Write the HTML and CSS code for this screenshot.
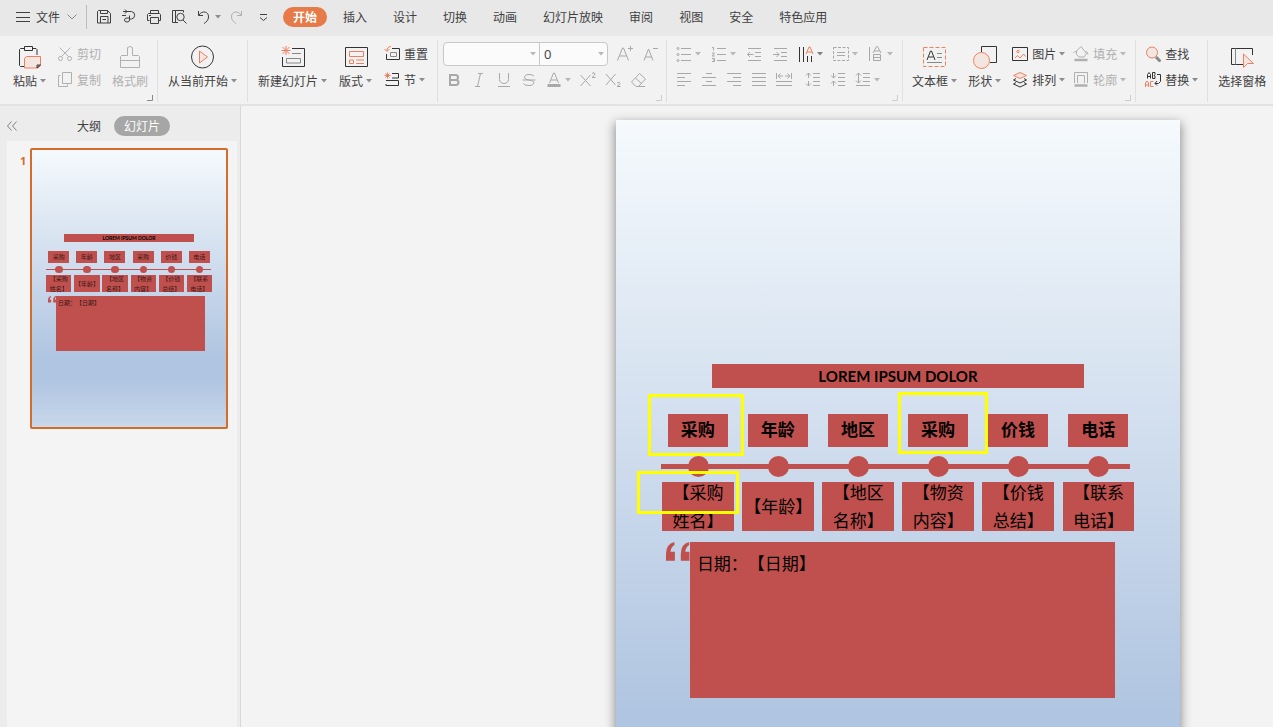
FILE: index.html
```html
<!DOCTYPE html>
<html lang="zh-CN">
<head>
<meta charset="utf-8">
<title>演示文稿</title>
<link rel="stylesheet" href="styles.css">
</head>
<body>
<svg class="defs" aria-hidden="true">
  <symbol id="caret" viewBox="0 0 6 4"><path d="M0 0h6L3 3.5z" fill="currentColor" stroke="none"/></symbol>
  <symbol id="corner" viewBox="0 0 6 6"><path d="M5.500 0v5.500H0" /></symbol>
  <symbol id="quote" viewBox="0 0 24 20"><path d="M8.500 0v3Q5 5 4.500 10H9v9H0v-7Q0 2 8.500 0zM23.500 0v3Q20 5 19.500 10H24v9h-9v-7Q15 2 23.500 0z" fill="currentColor" stroke="none"/></symbol>
</svg>

<header class="topbar">
  <button class="file"><svg class="i16" viewBox="0 0 16 16"><path d="M1 3.500h14M1 8.500h14M1 12.500h14"/></svg><span>文件</span><svg class="chev" viewBox="0 0 10 6"><path d="M.5.500 5 5 9.500.5"/></svg></button>
  <span class="rule"></span>
  <div class="quick">
    <button aria-label="保存"><svg class="i16" viewBox="0 0 16 16"><path d="M2.500 1.500h9l3 3v9.500h-13V2.500zM4.500 1.500v3h7v-3M4.500 14V7.500h7.500V14M6.500 10.500h3.500"/></svg></button>
    <button aria-label="输出"><svg class="i16" viewBox="0 0 16 16"><path d="M2 2.500h8.500a3.800 3.800 0 0 1 0 7.500H8.500V6.500M8.500 10v1a2.500 2 0 1 1-2.500-2h3M4 .5l2 2-2 2M1 6.500h4"/></svg></button>
    <button aria-label="打印"><svg class="i16" viewBox="0 0 16 16"><path d="M4.500 5V1.500h8V5M3.500 11.500h-2V5.500l1-1h11l1 1v6h-2M4.500 8.500h8v6h-8zM3 6.500h2"/></svg></button>
    <button aria-label="预览"><svg class="i16" viewBox="0 0 16 16"><path d="M7 13.500H1.500v-12h11v2"/><circle cx="9.500" cy="8" r="3.700"/><path d="m12 11 3.500 3.500M4.500 1.500v12"/></svg></button>
    <button aria-label="撤销" class="split"><svg class="i16" viewBox="0 0 16 16"><path d="M2.500 2v4.500H7M3 6C6 1 13 2.500 12.500 8c0 3-2 5-4.500 6.500"/></svg><svg class="caret"><use href="#caret"/></svg></button>
    <button aria-label="恢复" class="pale"><svg class="i16" viewBox="0 0 16 16"><path d="M13.500 2v4.500H9M13 6C10 1 3 2.500 3.500 8c0 3 2 5 4.500 6.500"/></svg></button>
    <button aria-label="自定义"><svg class="i16" viewBox="0 0 16 16"><path d="M5 5.500h7M5 8.500l3.500 3L12 8.500"/></svg></button>
  </div>
  <nav class="tabs">
    <button class="on">开始</button><button>插入</button><button>设计</button><button>切换</button><button>动画</button><button>幻灯片放映</button><button>审阅</button><button>视图</button><button>安全</button><button>特色应用</button>
  </nav>
</header>

<section class="ribbon">
  <div class="group first">
    <button class="big"><svg class="i24" viewBox="0 0 24 24"><path class="k" d="M6 3.500H2.500l-1 1v16l1 1H6M14 3.500h4l1 1V10M6.500 1.500h8v4h-8z"/><path class="o f" d="M8.500 11.500h14v9l-2.500 2.500H6.500v-9.500z"/><path d="M19 23v-3h3.500z" fill="#ee8060"/></svg><span>粘贴<svg class="caret"><use href="#caret"/></svg></span></button>
    <div class="rows off">
      <button class="cmd"><svg class="i16" viewBox="0 0 16 16"><path d="M2.500 1.500 12 11M13.500 1.500 4 11"/><circle cx="3.500" cy="12.500" r="2"/><circle cx="12.500" cy="12.500" r="2"/></svg>剪切</button>
      <button class="cmd"><svg class="i16" viewBox="0 0 16 16"><path d="M5.500.5h9v11h-9zM3.500 3.500h-2v11h9v-2"/></svg>复制</button>
    </div>
    <button class="big off"><svg class="i24" viewBox="0 0 24 24"><path d="M9.500 10.500V2.500q2.500-2 5 0v8h6l1 1v11h-19v-11l1-1zM2.500 15.500h19"/></svg><span>格式刷</span></button>
    <button class="launch dark" aria-label="更多"><svg><use href="#corner"/></svg></button>
  </div>
  <div class="group">
    <button class="big"><svg class="i24" viewBox="0 0 24 24"><circle class="k" cx="11.500" cy="12" r="11"/><path class="o f" d="M8.500 6v12l8-6z"/></svg><span>从当前开始<svg class="caret"><use href="#caret"/></svg></span></button>
  </div>
  <div class="group slides">
    <button class="big"><svg class="i24" viewBox="0 0 24 24"><path class="k" d="M11 3.500h12.500v18h-22V12"/><path class="g" d="M11 8.500h9M5.500 13.500h14v4.500h-14z"/><path class="o" d="M5 1v9M.5 5.500h9M1.500 2l7 7M8.500 2l-7 7"/></svg><span>新建幻灯片<svg class="caret"><use href="#caret"/></svg></span></button>
    <button class="big"><svg class="i24" viewBox="0 0 24 24"><path class="k" d="M1.500 2.500h22v19h-22z"/><path class="o" d="M5.500 6.500h14v5h-14zM5.500 15h4v3.500h-4zM12 15h8M12 18.500h8"/></svg><span>版式<svg class="caret"><use href="#caret"/></svg></span></button>
    <div class="rows">
      <button class="cmd"><svg class="i16" viewBox="0 0 16 16"><path class="k" d="M8 2.500h7.500v11h-13V8"/><path class="g" d="M6.500 6.500h6v4h-6z"/><path class="o" d="M7 .5Q3 .5 3 5M.5 3 3 5.500 5.500 3"/></svg>重置</button>
      <button class="cmd"><svg class="i16" viewBox="0 0 16 16"><path class="k" d="M8 1.500h6.500V6H8M2 8.500h12.500v5H2V12"/><path class="o" d="M3.500.5v6M.5 3.500h6M1.500 1.500l4 4M5.500 1.500l-4 4"/></svg>节<svg class="caret"><use href="#caret"/></svg></button>
    </div>
  </div>
  <div class="group font off">
    <div class="rows">
      <div class="row"><div class="combo"><label><input class="face" aria-label="字体" value=""><svg class="caret"><use href="#caret"/></svg></label><label><input class="size" aria-label="字号" value="0"><svg class="caret"><use href="#caret"/></svg></label></div>
        <button aria-label="增大字号"><svg class="i16" viewBox="0 0 16 16"><path d="M.5 14.500 5.500 2h1l5 12.500M2.500 10h7M13.500 0v5M11 2.500h5"/></svg></button>
        <button aria-label="减小字号"><svg class="i16" viewBox="0 0 16 16"><path d="M2 14.500 6.500 3 11 14.500M3.500 11h6M11 2.500h5"/></svg></button></div>
      <div class="row inset">
        <button aria-label="加粗"><svg class="i16" viewBox="0 0 16 16"><path stroke-width="2" d="M4 3h5.500a2.500 2.500 0 0 1 0 5H4zM4 8h6a2.500 2.500 0 0 1 0 5H4z"/></svg></button>
        <button aria-label="倾斜"><svg class="i16" viewBox="0 0 16 16"><path d="M7 1.500h5M4 14.500h5M9.500 1.500l-3 13"/></svg></button>
        <button aria-label="下划线"><svg class="i16" viewBox="0 0 16 16"><path d="M3.500 1v6.500a4.500 4 0 0 0 9 0V1M2 14.500h12"/></svg></button>
        <button aria-label="删除线"><svg class="i16" viewBox="0 0 16 16"><path d="M13 4Q12 2.500 8 2.500c-6 0-6 5 0 5.500 7 .5 6 5.500 0 5.500q-5 0-5.500-2M1.500 8h13"/></svg></button>
        <button aria-label="字体颜色" class="split"><svg class="i16" viewBox="0 0 16 16"><path d="M3.500 11 7.500 1h1l4 10M5 8h6"/><path d="M1.500 13.500h13" stroke-width="3"/></svg><svg class="caret"><use href="#caret"/></svg></button>
        <button aria-label="上标"><svg class="i16" viewBox="0 0 16 16"><path d="m.5 3 10 11M10.500 3 .5 14M12 1.500q2.500-2 3 .5 0 1-3 3.500h3.500"/></svg></button>
        <button aria-label="下标"><svg class="i16" viewBox="0 0 16 16"><path d="m1 2 9.500 11M10.500 2 1 13M12 11q2.500-2 3 .5 0 1-3 3h3.500"/></svg></button>
        <button aria-label="清除格式"><svg class="i16" viewBox="0 0 16 16"><path d="m9.500 1.500 6 5.500-7 7.500H6L1.500 10zM5.500 6l6 5.500M7 14.500h8"/></svg></button>
      </div>
    </div>
    <button class="launch" aria-label="更多"><svg><use href="#corner"/></svg></button>
  </div>
  <div class="group para off">
    <div class="rows">
      <div class="row wide">
        <button aria-label="项目符号" class="split"><svg class="i16" viewBox="0 0 16 16"><path d="M5 2.500h10M5 8.500h10M5 14.500h10"/><circle cx="2" cy="2.500" r="1"/><circle cx="2" cy="8.500" r="1"/><circle cx="2" cy="14.500" r="1"/></svg><svg class="caret"><use href="#caret"/></svg></button>
        <button aria-label="编号" class="split"><svg class="i16" viewBox="0 0 16 16"><path d="M6 2.500h9M6 8.500h9M6 14.500h9M1 1.500h1.500v3M1 7h2.500L1 10h3M1 12.500h2.500v3H1M2 14h1.500"/></svg><svg class="caret"><use href="#caret"/></svg></button>
        <button aria-label="减少缩进"><svg class="i16" viewBox="0 0 16 16"><path d="M2 2.500h13M9 6.500h6M9 10.500h6M2 14.500h13M1.500 8.500h6M4 6 1.500 8.500 4 11"/></svg></button>
        <button aria-label="增加缩进"><svg class="i16" viewBox="0 0 16 16"><path d="M2 2.500h13M9 6.500h6M9 10.500h6M2 14.500h13M1 8.500h6M4.500 6 7 8.500 4.500 11"/></svg></button>
        <button aria-label="文字方向" class="split dark"><svg class="i16" viewBox="0 0 16 16"><path class="k" d="M1.500 1v15M5.500 1v15M9.500 10v6M13.500 10v6"/><path class="o" d="M8 8l3-7h1l3 7M9 6h5"/></svg><svg class="caret"><use href="#caret"/></svg></button>
        <button aria-label="对齐文本" class="split"><svg class="i16" viewBox="0 0 16 16"><path stroke-dasharray="3 1.500" d="M.5 1.500h15v13H.5z"/><path d="M4 6.500h8M4 9.500h8"/></svg><svg class="caret"><use href="#caret"/></svg></button>
        <button aria-label="文字排列" class="split"><svg class="i16" viewBox="0 0 16 16"><path d="M1.500 1v14M5 7l3.500-6.500h1L13 7M6.500 5h5M5.500 8.500h7v6h-7zM5.500 11.500h7"/></svg><svg class="caret"><use href="#caret"/></svg></button>
      </div>
      <div class="row">
        <button aria-label="左对齐"><svg class="i16" viewBox="0 0 16 16"><path d="M1 1.500h14M1 5.500h8M1 9.500h14M1 13.500h8"/></svg></button>
        <button aria-label="居中"><svg class="i16" viewBox="0 0 16 16"><path d="M5 1.500h6M1 5.500h14M5 9.500h6M1 13.500h14"/></svg></button>
        <button aria-label="右对齐"><svg class="i16" viewBox="0 0 16 16"><path d="M1 1.500h14M7 5.500h8M1 9.500h14M7 13.500h8"/></svg></button>
        <button aria-label="两端对齐"><svg class="i16" viewBox="0 0 16 16"><path d="M1 1.500h14M1 5.500h14M1 9.500h14M1 13.500h14"/></svg></button>
        <button aria-label="分散对齐"><svg class="i16" viewBox="0 0 16 16"><path d="M.5 1v6M15.500 1v6M2 4h5M9 4h5M4.500 1.500 2 4l2.500 2.500M11.500 1.500 14 4l-2.500 2.500M0 9.500h16M0 13.500h16"/></svg></button>
        <button aria-label="增大段距" class="lead"><svg class="i16" viewBox="0 0 16 16"><path d="M8 1.500h7M8 5.500h7M8 9.500h7M8 13.500h7M3.500 1v5M1 3.500 3.500 1 6 3.500M3.500 9v5M1 11.500 3.500 14 6 11.500"/></svg></button>
        <button aria-label="减小段距"><svg class="i16" viewBox="0 0 16 16"><path d="M8 1.500h7M8 5.500h7M8 9.500h7M8 13.500h7M3.500 1v5M1 3.500 3.500 6 6 3.500M3.500 9v5M1 11.500 3.500 9 6 11.500"/></svg></button>
        <button aria-label="行距" class="split"><svg class="i16" viewBox="0 0 16 16"><path d="M8 1.500h7M8 5.500h7M8 9.500h7M1 13.500h14M3.500 1v10M1 3.500 3.500 1 6 3.500M1 8.500 3.500 11 6 8.500"/></svg><svg class="caret"><use href="#caret"/></svg></button>
      </div>
    </div>
    <button class="launch" aria-label="更多"><svg><use href="#corner"/></svg></button>
  </div>
  <div class="group draw">
    <button class="big"><svg class="i24" viewBox="0 0 24 24"><path class="o" stroke-dasharray="4 2" d="M.5 2.500h22v19H.5z"/><path class="k" d="M4 15l3.500-9h1l3.500 9M5.500 12h5"/><path class="g" d="M14 8.500h5M14 12.500h5M4 17.500h15"/></svg><span>文本框<svg class="caret"><use href="#caret"/></svg></span></button>
    <button class="big"><svg class="i24" viewBox="0 0 24 24"><path class="k" d="M8.500 7V1.500h15v16H17"/><circle class="o f" cx="8.500" cy="15.500" r="8"/></svg><span>形状<svg class="caret"><use href="#caret"/></svg></span></button>
    <div class="rows">
      <button class="cmd"><svg class="i16" viewBox="0 0 16 16"><path class="k" d="M.5 1.500h15v13H.5z"/><circle class="o" cx="6" cy="5.500" r="1.200"/><path class="o" d="M3 12l2.500-2.500L8 12l3.500-4 2 2.500"/></svg>图片<svg class="caret"><use href="#caret"/></svg></button>
      <button class="cmd"><svg class="i16" viewBox="0 0 16 16"><path class="o f" d="m8 .5 6.500 3-6.500 3-6.500-3z"/><path class="k" d="M4 6.500 1.500 8 8 11l6.500-3L12 6.500M4 10.500 1.500 12 8 15l6.500-3-2.500-1.500"/></svg>排列<svg class="caret"><use href="#caret"/></svg></button>
    </div>
    <div class="rows off">
      <button class="cmd"><svg class="i16" viewBox="0 0 16 16"><path d="M3.500 5.500H2L.5 7M12.500 5.500q2 0 2.500 3M3.500 5v3.500l2.500 2.500h5l2.500-3.500L8 .5z"/><path d="M1.500 14h13" stroke-width="2.500"/></svg>填充<svg class="caret"><use href="#caret"/></svg></button>
      <button class="cmd"><svg class="i16" viewBox="0 0 16 16"><path d="M1.500 11V.5h13V11M4.500 11V3.500h7V11"/><path d="M1.500 13.500h13" stroke-width="2.500"/></svg>轮廓<svg class="caret"><use href="#caret"/></svg></button>
    </div>
    <button class="launch" aria-label="更多"><svg><use href="#corner"/></svg></button>
  </div>
  <div class="group find">
    <div class="rows">
      <button class="cmd"><svg class="i16" viewBox="0 0 16 16"><circle class="o f" cx="7" cy="6.500" r="5.500"/><path class="g" d="m11 11 4.500 4.500" stroke-width="3"/></svg>查找</button>
      <button class="cmd"><svg class="i16" viewBox="0 0 16 16"><path class="k" d="M2.500 6.500v-4l1.500-2 1.500 2v4M2.500 4.500h3M7.500.5v6h2.500v-2.500L9 3.500l1-1V.500zM12 2.500h3.500v7l-2 2H10M12 9l-2 2.500 2 2"/><path class="o" d="M.5 15v-4L2 9l1.500 2v4M.5 13h3M8.500 9.500h-3V14.500h3"/></svg>替换<svg class="caret"><use href="#caret"/></svg></button>
    </div>
  </div>
  <div class="group last">
    <button class="big"><svg class="i24" viewBox="0 0 24 24"><path class="k" d="M13 19.500H1.500v-16h21V10"/><path class="g" d="M5.500 3.500v16"/><path class="o f" d="M13.500 9v13.500l4-4h6z"/></svg><span>选择窗格</span></button>
  </div>
</section>

<main class="work">
  <aside class="side">
    <div class="sidehead">
      <button class="fold" aria-label="收起"><svg viewBox="0 0 10 10"><path d="M4.500.5.500 5l4 4.500M9.500.5 5.500 5l4 4.500"/></svg></button>
      <button class="view">大纲</button><button class="view on">幻灯片</button>
    </div>
    <div class="thumbs">
      <span class="num">1</span>
      <div class="slide mini">
        <div class="title">LOREM IPSUM DOLOR</div>
        <div class="heads"><span>采购</span><span>年龄</span><span>地区</span><span>采购</span><span>价钱</span><span>电话</span></div>
        <div class="line"></div>
        <div class="dots"><i></i><i></i><i></i><i></i><i></i><i></i></div>
        <div class="fields"><span>【采购<br>姓名】</span><span>【年龄】</span><span>【地区<br>名称】</span><span>【物资<br>内容】</span><span>【价钱<br>总结】</span><span>【联系<br>电话】</span></div>
        <svg class="mark" viewBox="0 0 24 20"><use href="#quote"/></svg>
        <div class="note">日期：【日期】</div>
      </div>
    </div>
  </aside>
  <div class="canvas">
    <div class="slide full">
      <div class="title">LOREM IPSUM DOLOR</div>
      <div class="heads"><span>采购</span><span>年龄</span><span>地区</span><span>采购</span><span>价钱</span><span>电话</span></div>
      <div class="line"></div>
      <div class="dots"><i></i><i></i><i></i><i></i><i></i><i></i></div>
      <div class="fields"><span>【采购<br>姓名】</span><span>【年龄】</span><span>【地区<br>名称】</span><span>【物资<br>内容】</span><span>【价钱<br>总结】</span><span>【联系<br>电话】</span></div>
      <svg class="mark" viewBox="0 0 24 20"><use href="#quote"/></svg>
      <div class="note">日期：【日期】</div>
      <div class="frame a"></div><div class="frame b"></div><div class="frame c"></div>
    </div>
  </div>
</main>
</body>
</html>
```
FILE: styles.css
```css
* { box-sizing: border-box; }
body {
  margin: 0; height: 100vh; display: flex; flex-direction: column; overflow: hidden;
  font: 12px/16px "Noto Sans CJK SC", sans-serif; color: #404040; background: #f3f3f3;
}
button { margin: 0; padding: 0; border: 0; background: none; font: inherit; color: inherit; white-space: nowrap; }
svg { display: block; flex: none; fill: none; stroke: currentColor; }
.defs { position: absolute; width: 0; height: 0; }
.i16 { width: 16px; height: 16px; }
.i24 { width: 24px; height: 24px; }
.caret { width: 6px; height: 4px; margin-left: 3px; color: #8c8c8c; }
.k { stroke: #333; }
.g { stroke: #888; }
.o { stroke: #ee8060; }
.f { fill: #f3e5e0; }

/* menu bar */
.topbar { display: flex; align-items: center; height: 36px; flex: none; background: #e8e8e8; padding: 0 15px 2px; }
.file { display: flex; align-items: center; gap: 5px; }
.chev { width: 10px; height: 6px; margin-left: 2px; color: #888; }
.rule { width: 1px; height: 24px; margin: 0 9px; background: #bdbdbd; }
.quick { display: flex; gap: 9px; }
.quick .split { margin-right: -2px; }
.quick button:last-child { margin-left: 2px; }
.quick .pale { color: #b0b0b0; }
.split { display: flex; align-items: center; }
.tabs { display: flex; gap: 6px; margin-left: 12px; }
.tabs button { padding: 2px 10px; border-radius: 10px; }
.tabs .on { background: #e67a48; color: #fff; font-weight: 700; }

/* ribbon */
.ribbon { display: flex; flex: none; padding: 4px 0 2px; background: #f2f2f2; border-bottom: 2px solid #e2e2e2; height: 70px; }
.group { position: relative; display: flex; gap: 11px; padding: 0 10px; border-right: 1px solid #e0e0e0; flex: none; }
.group.first { padding: 0 9px 0 13px; }
.group.slides { gap: 12px; padding-right: 9px; }
.group.font { padding: 0 8px 0 5px; }
.group.para { padding: 0 9px; }
.group.draw, .group.find { padding: 0 9px; }
.group.last { border: 0; }
.big { display: flex; flex-direction: column; align-items: center; gap: 4px; padding-top: 5px; align-self: flex-start; }
.big span { display: flex; align-items: center; }
.rows { display: flex; flex-direction: column; padding-top: 1px; }
.rows > * { height: 26px; }
.rows + .rows { margin-left: -3px; }
.cmd { display: flex; align-items: center; gap: 4px; }
.cmd .caret { margin-left: -1px; }
.row { display: flex; align-items: center; gap: 9px; }
.wide { gap: 10px; }
.inset { padding-left: 3px; }
.lead { margin-left: 4px; }
.off { color: #a8a8a8; }
.off .caret { color: #b8b8b8; }
.off .dark .caret { color: #808080; }
.big.off, .off .cmd { color: #b0b0b0; }
.launch { position: absolute; right: 4px; bottom: 1px; color: #ccc; }
.launch svg { width: 6px; height: 6px; }
.launch.dark { color: #888; }
.combo { display: flex; height: 24px; width: 165px; border: 1px solid #c8c8c8; border-radius: 4px; background: #fbfbfb; }
.combo label { display: flex; align-items: center; padding-right: 3px; flex: 1; }
.combo label:first-child { flex: 0 0 96px; border-right: 1px solid #c8c8c8; }
.combo input { min-width: 0; width: 100%; height: 20px; padding: 0 0 0 4px; border: 0; background: none; font: 13px "Open Sans", sans-serif; color: #404040; outline: 0; }

/* workspace */
.work { display: flex; flex: 1; min-height: 0; }
.side { display: flex; flex-direction: column; width: 241px; flex: none; padding: 0 3px 0 7px; background: #ececec; border-right: 1px solid #d8d8d8; }
.sidehead { display: flex; align-items: center; height: 35px; padding-top: 4px; flex: none; }
.fold { margin-right: 60px; color: #808080; }
.fold svg { width: 10px; height: 10px; }
.view.on { margin-left: 13px; padding: 2px 10px; border-radius: 10px; background: #a6a6a6; color: #fff; }
.thumbs { display: flex; align-items: flex-start; gap: 5px; flex: 1; padding: 7px 9px 0 13px; background: #f4f4f4; }
.num { padding-top: 5px; font: 700 11px/16px "Noto Sans", sans-serif; color: #d66c2a; width: 5px; flex: none; }
.canvas { flex: 1; display: flex; align-items: flex-start; justify-content: flex-end; padding: 14px 93px 0 0; overflow: hidden; }

/* slide: shapes sit on a free canvas, in shares of its size */
.slide { position: relative; background: linear-gradient(#f6fafd, #b0c5e1 74%, #b0c5e1 83%, #cad9eb); color: #000; text-spacing-trim: space-all; }
.slide > * { position: absolute; }
.full { width: 564px; height: 800px; flex: none; box-shadow: 0 4px 10px 1px #8c8c8c; font-size: 17px; line-height: 28px; }
.mini { flex: 1; aspect-ratio: 198 / 281; outline: 2px solid #d66c2a; outline-offset: -2px; border-radius: 2px; font-size: 6px; line-height: 10px; color: #401818; }
.title, .heads span, .line, .dots i, .fields span, .note { background: #c0504d; }
.title { left: 17%; top: 30.5%; width: 66%; height: 3%; display: flex; align-items: center; justify-content: center; font-family: Lato, sans-serif; font-weight: 700; }
.full .title { font-size: 15px; }
.mini .title { font-size: 5px; color: #000; }
.heads, .fields, .dots { display: flex; justify-content: space-between; }
.heads { left: 9.2%; top: 36.8%; width: 81.6%; height: 4.1%; font-weight: 700; }
.heads span { width: 13%; display: flex; align-items: center; justify-content: center; }
.full .heads span { padding-bottom: 4px; }
.mini .heads { font-weight: 400; }
.line { left: 8%; top: 43%; width: 83.2%; height: 0.6%; }
.mini .line { top: 43.2%; height: 1px; }
.dots { left: 12.7%; top: 42%; width: 74.8%; }
.dots i { width: 5%; aspect-ratio: 1; border-radius: 50%; }
.fields { left: 8.2%; top: 45.2%; width: 83.7%; height: 6.2%; }
.fields span { width: 15.2%; display: grid; place-content: center; text-align: center; white-space: nowrap; }
.mark { left: 8.9%; top: 52.8%; width: 4.2%; color: #c0504d; }
.note { left: 13.1%; top: 52.8%; width: 75.4%; height: 19.5%; }
.full .note { padding: 7px; }
.mini .note { padding: 2px; }
.frame { border: 3px solid #ff0; }
.frame.a { left: 32px; top: 274px; width: 96px; height: 62px; }
.frame.b { left: 282px; top: 272px; width: 90px; height: 62px; }
.frame.c { left: 21px; top: 351px; width: 102px; height: 43px; }
```
